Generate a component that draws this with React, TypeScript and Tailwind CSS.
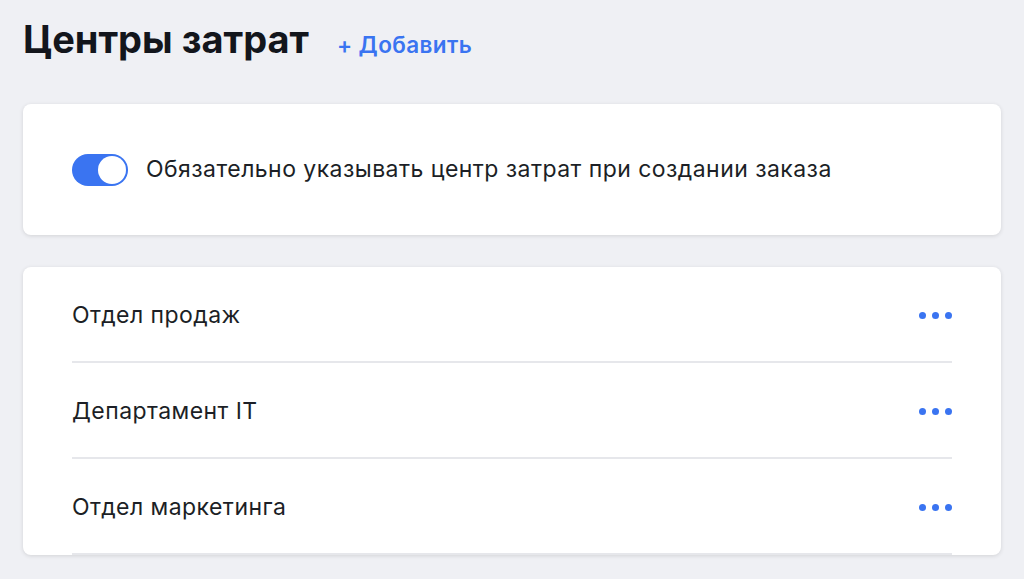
import React from 'react';

const Dots: React.FC = () => (
  <button className="flex items-center gap-[6px] pt-[3px]" aria-label="Ещё">
    <span className="w-[7px] h-[7px] rounded-full bg-[#3a74f1]"></span>
    <span className="w-[7px] h-[7px] rounded-full bg-[#3a74f1]"></span>
    <span className="w-[7px] h-[7px] rounded-full bg-[#3a74f1]"></span>
  </button>
);

const App: React.FC = () => {
  const centers = ['Отдел продаж', 'Департамент IT', 'Отдел маркетинга'];

  return (
    <div
      className="min-h-[579px] w-[1024px] bg-[#eff0f4] px-[23px] pt-[16px] pb-6 text-[#1c1f26]"
      style={{ fontFamily: 'Inter, "Noto Sans", sans-serif' }}
    >
      <div className="flex items-baseline h-[44px]">
        <h1 className="text-[38px] leading-[46px] font-bold text-[#13161c]">Центры затрат</h1>
        <button className="ml-[28px] text-[22.5px] font-semibold tracking-[0.4px] text-[#3a74f1]">+ Добавить</button>
      </div>

      <div className="mt-[44px] bg-white rounded-lg shadow-[0_1px_4px_rgba(0,0,0,0.12)] h-[131px] px-[49px] flex items-center">
        <div className="w-[56px] h-[32px] rounded-full bg-[#3a74f1] flex items-center justify-end pr-[2px]">
          <span className="w-[28px] h-[28px] rounded-full bg-white"></span>
        </div>
        <span className="ml-[18px] text-[23px] tracking-[0.45px] text-[#1c1f26]">
          Обязательно указывать центр затрат при создании заказа
        </span>
      </div>

      <div className="mt-[32px] bg-white rounded-lg shadow-[0_1px_4px_rgba(0,0,0,0.12)] px-[49px]">
        {centers.map((name) => (
          <div
            key={name}
            className="h-[96px] flex items-center justify-between border-b-2 border-[#e6e7eb]"
          >
            <span className="text-[23px] tracking-[0.45px] pt-[3px] text-[#1c1f26]">{name}</span>
            <Dots />
          </div>
        ))}
      </div>
    </div>
  );
};

export default App;
